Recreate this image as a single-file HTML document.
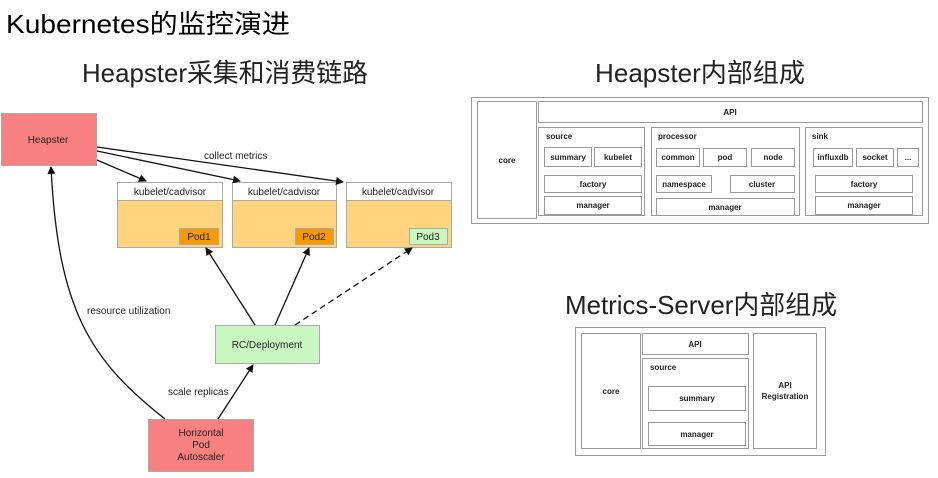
<!DOCTYPE html>
<html><head><meta charset="utf-8"><style>
html,body{margin:0;padding:0;background:#fff;width:938px;height:478px;overflow:hidden}
svg{display:block}
text{font-family:"Liberation Sans","Noto Sans CJK SC",sans-serif}
.s{font-size:10px;fill:#222}
.b{font-size:8px;font-weight:bold;fill:#222}
.bx{fill:#fff;stroke:#999;stroke-width:1}
</style></head><body>
<svg width="938" height="478" viewBox="0 0 938 478" xmlns="http://www.w3.org/2000/svg">
<defs><marker id="ar" markerWidth="8" markerHeight="8" refX="7" refY="4" orient="auto" markerUnits="userSpaceOnUse"><path d="M0,0 L8,4 L0,8 Z" fill="#111"/></marker></defs>
<text x="6" y="33" font-size="26" fill="#000" textLength="284" lengthAdjust="spacingAndGlyphs">Kubernetes的监控演进</text>
<text x="82" y="82" font-size="26" fill="#222" textLength="286" lengthAdjust="spacingAndGlyphs">Heapster采集和消费链路</text>
<text x="595" y="82" font-size="26" fill="#222" textLength="210" lengthAdjust="spacingAndGlyphs">Heapster内部组成</text>
<text x="565" y="314" font-size="26" fill="#222" textLength="272" lengthAdjust="spacingAndGlyphs">Metrics-Server内部组成</text>

<rect x="1.5" y="113.5" width="95" height="52" fill="#f88080" stroke="#aaa"/>
<text x="48" y="143" class="s" text-anchor="middle">Heapster</text>
<g>
<rect x="117.5" y="182.5" width="105" height="65" fill="#fed47e" stroke="#aaa"/>
<rect x="117.5" y="182.5" width="105" height="18" fill="#fff" stroke="#aaa"/>
<text x="170" y="195" class="s" text-anchor="middle">kubelet/cadvisor</text>
<rect x="179.5" y="228.5" width="39" height="16" fill="#f59a00" stroke="#aaa"/>
<text x="199" y="240" class="s" text-anchor="middle">Pod1</text>
<rect x="232.5" y="182.5" width="104" height="65" fill="#fed47e" stroke="#aaa"/>
<rect x="232.5" y="182.5" width="104" height="18" fill="#fff" stroke="#aaa"/>
<text x="284" y="195" class="s" text-anchor="middle">kubelet/cadvisor</text>
<rect x="295.5" y="228.5" width="38" height="16" fill="#f59a00" stroke="#aaa"/>
<text x="314" y="240" class="s" text-anchor="middle">Pod2</text>
<rect x="346.5" y="182.5" width="105" height="65" fill="#fed47e" stroke="#aaa"/>
<rect x="346.5" y="182.5" width="105" height="18" fill="#fff" stroke="#aaa"/>
<text x="398" y="195" class="s" text-anchor="middle">kubelet/cadvisor</text>
<rect x="409.5" y="228.5" width="38" height="16" fill="#c8f8c0" stroke="#aaa"/>
<text x="428" y="240" class="s" text-anchor="middle">Pod3</text>
</g>
<rect x="215.5" y="325.5" width="104" height="38" fill="#c8f8c0" stroke="#aaa"/>
<text x="267" y="348" class="s" text-anchor="middle">RC/Deployment</text>
<rect x="148.5" y="419.5" width="105" height="52" fill="#f88080" stroke="#aaa"/>
<text x="201" y="436" class="s" text-anchor="middle">Horizontal</text>
<text x="201" y="448" class="s" text-anchor="middle">Pod</text>
<text x="201" y="460" class="s" text-anchor="middle">Autoscaler</text>
<g stroke="#111" stroke-width="1.3" fill="none">
<line x1="97" y1="160" x2="146" y2="181" marker-end="url(#ar)"/>
<line x1="97" y1="151" x2="240" y2="181" marker-end="url(#ar)"/>
<line x1="97" y1="147" x2="343" y2="182" marker-end="url(#ar)"/>
<line x1="255" y1="325" x2="206" y2="248" marker-end="url(#ar)"/>
<line x1="275" y1="325" x2="309" y2="248" marker-end="url(#ar)"/>
<line x1="295" y1="325" x2="412" y2="248" stroke-dasharray="6,4" marker-end="url(#ar)"/>
<line x1="218" y1="419" x2="253" y2="365" marker-end="url(#ar)"/>
<path d="M165,419 C90,360 58,310 51,167" marker-end="url(#ar)"/>
</g>
<text x="204" y="159" class="s">collect metrics</text>
<text x="87" y="314" class="s">resource utilization</text>
<text x="168" y="395" class="s">scale replicas</text>

<rect x="471.5" y="97.5" width="457" height="126" class="bx"/>
<rect x="477.5" y="101.5" width="59" height="117" class="bx"/>
<text x="507" y="163" class="b" text-anchor="middle">core</text>
<rect x="538.5" y="101.5" width="384" height="21" class="bx"/>
<text x="730" y="115" class="b" text-anchor="middle">API</text>
<rect x="538.5" y="127.5" width="106" height="88" class="bx"/>
<text x="546" y="139" class="b">source</text>
<rect x="544.5" y="147.5" width="47" height="19" class="bx"/><text x="568" y="160" class="b" text-anchor="middle">summary</text>
<rect x="594.5" y="147.5" width="47" height="19" class="bx"/><text x="618" y="160" class="b" text-anchor="middle">kubelet</text>
<rect x="544.5" y="175.5" width="97" height="17" class="bx"/><text x="593" y="187" class="b" text-anchor="middle">factory</text>
<rect x="544.5" y="196.5" width="97" height="18" class="bx"/><text x="593" y="208" class="b" text-anchor="middle">manager</text>
<rect x="651.5" y="127.5" width="148" height="88" class="bx"/>
<text x="658" y="139" class="b">processor</text>
<rect x="656.5" y="148.5" width="43" height="18" class="bx"/><text x="678" y="160" class="b" text-anchor="middle">common</text>
<rect x="703.5" y="148.5" width="43" height="18" class="bx"/><text x="725" y="160" class="b" text-anchor="middle">pod</text>
<rect x="751.5" y="148.5" width="43" height="18" class="bx"/><text x="773" y="160" class="b" text-anchor="middle">node</text>
<rect x="656.5" y="175.5" width="55" height="17" class="bx"/><text x="684" y="187" class="b" text-anchor="middle">namespace</text>
<rect x="730.5" y="175.5" width="64" height="17" class="bx"/><text x="762" y="187" class="b" text-anchor="middle">cluster</text>
<rect x="656.5" y="198.5" width="138" height="17" class="bx"/><text x="725" y="210" class="b" text-anchor="middle">manager</text>
<rect x="805.5" y="127.5" width="117" height="88" class="bx"/>
<text x="812" y="139" class="b">sink</text>
<rect x="813.5" y="148.5" width="39" height="18" class="bx"/><text x="833" y="160" class="b" text-anchor="middle">influxdb</text>
<rect x="856.5" y="148.5" width="37" height="18" class="bx"/><text x="875" y="160" class="b" text-anchor="middle">socket</text>
<rect x="897.5" y="148.5" width="21" height="18" class="bx"/><text x="908" y="160" class="b" text-anchor="middle">...</text>
<rect x="815.5" y="175.5" width="97" height="17" class="bx"/><text x="864" y="187" class="b" text-anchor="middle">factory</text>
<rect x="815.5" y="196.5" width="97" height="18" class="bx"/><text x="864" y="208" class="b" text-anchor="middle">manager</text>

<rect x="575.5" y="327.5" width="250" height="128" class="bx"/>
<rect x="581.5" y="333.5" width="59" height="115" class="bx"/>
<text x="611" y="394" class="b" text-anchor="middle">core</text>
<rect x="642.5" y="333.5" width="106" height="21" class="bx"/>
<text x="695" y="347" class="b" text-anchor="middle">API</text>
<rect x="642.5" y="358.5" width="106" height="90" class="bx"/>
<text x="650" y="370" class="b">source</text>
<rect x="648.5" y="386.5" width="97" height="24" class="bx"/><text x="697" y="401" class="b" text-anchor="middle">summary</text>
<rect x="648.5" y="422.5" width="97" height="23" class="bx"/><text x="697" y="437" class="b" text-anchor="middle">manager</text>
<rect x="753.5" y="333.5" width="63" height="115" class="bx"/>
<text x="785" y="388" class="b" text-anchor="middle">API</text>
<text x="785" y="399" class="b" text-anchor="middle">Registration</text>
</svg>
</body></html>
